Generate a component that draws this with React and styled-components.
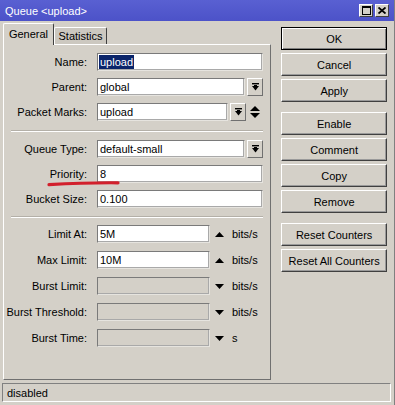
import React from "react";
import styled, { createGlobalStyle } from "styled-components";

const GlobalStyle = createGlobalStyle`
  html, body {
    margin: 0;
    padding: 0;
    background: #d4d0c8;
  }
  body {
    font-family: "Liberation Sans", Arial, sans-serif;
    font-size: 11px;
    color: #000;
  }
  * {
    box-sizing: border-box;
  }
`;

const DropIcon = () => (
  <svg width="7" height="8" viewBox="0 0 7 8">
    <rect x="0" y="0" width="7" height="1.4" fill="#000" />
    <polygon points="0,3 7,3 3.5,7.5" fill="#000" />
    <rect x="2" y="2" width="3" height="1.2" fill="#000" />
  </svg>
);

const Arrow = ({ up }) => (
  <svg width="9" height="5" viewBox="0 0 9 5">
    <polygon points={up ? "0,5 9,5 4.5,0" : "0,0 9,0 4.5,5"} fill="#000" />
  </svg>
);

const UpDown = () => (
  <svg width="12" height="12" viewBox="0 0 12 12">
    <polygon points="1,5 11,5 6,0" fill="#000" />
    <polygon points="1,7 11,7 6,12" fill="#000" />
  </svg>
);

// each section is a block of rows, separated by an etched line
const sections = [
  {
    gap: 7,
    rows: [
      { label: "Name:", value: "upload", selected: true, width: 166 },
      { label: "Parent:", value: "global", width: 148, drop: true },
      { label: "Packet Marks:", value: "upload", width: 131, drop: true, updown: true },
    ],
  },
  {
    gap: 7,
    sep: 5,
    rows: [
      { label: "Queue Type:", value: "default-small", width: 148, drop: true },
      { label: "Priority:", value: "8", width: 166 },
      { label: "Bucket Size:", value: "0.100", width: 166 },
    ],
  },
  {
    gap: 8,
    sep: 3,
    rows: [
      { label: "Limit At:", value: "5M", width: 113, arrow: "up", unit: "bits/s" },
      { label: "Max Limit:", value: "10M", width: 113, arrow: "up", unit: "bits/s" },
      { label: "Burst Limit:", value: "", width: 113, arrow: "down", unit: "bits/s", disabled: true },
      { label: "Burst Threshold:", value: "", width: 113, arrow: "down", unit: "bits/s", disabled: true },
      { label: "Burst Time:", value: "", width: 113, arrow: "down", unit: "s", disabled: true },
    ],
  },
];

const buttonGroups = [
  ["OK", "Cancel", "Apply"],
  ["Enable", "Comment", "Copy", "Remove"],
  ["Reset Counters", "Reset All Counters"],
];

const App = () => {
  return (
    <>
      <GlobalStyle />
      <Window>
        <TitleBar>
          <TitleText>Queue &lt;upload&gt;</TitleText>
          <TitleButtons>
            <TitleBtn>
              <svg width="9" height="9" viewBox="0 0 9 9">
                <rect x="0.5" y="0.5" width="8" height="8" fill="none" stroke="#000" />
                <rect x="0" y="0" width="9" height="2" fill="#000" />
              </svg>
            </TitleBtn>
            <TitleBtn>
              <svg width="8" height="7" viewBox="0 0 8 7">
                <path d="M0.5 0.5 L7.5 6.5 M7.5 0.5 L0.5 6.5" stroke="#000" strokeWidth="1.8" />
              </svg>
            </TitleBtn>
          </TitleButtons>
        </TitleBar>

        <Body>
          <LeftSide>
            <Tabs>
              <Tab $active>General</Tab>
              <Tab>Statistics</Tab>
            </Tabs>
            <Panel>
              <Form>
                {sections.map((sec, si) => (
                  <React.Fragment key={si}>
                    {sec.sep && <Separator $h={sec.sep} />}
                    <Section $gap={sec.gap}>
                      {sec.rows.map((row) => (
                        <Row key={row.label}>
                          <Label>{row.label}</Label>
                          <Field $width={row.width} $disabled={row.disabled}>
                            {row.selected ? <Selected>{row.value}</Selected> : row.value}
                          </Field>
                          {row.drop && (
                            <DropButton>
                              <DropIcon />
                            </DropButton>
                          )}
                          {row.updown && (
                            <UpDownWrap>
                              <UpDown />
                            </UpDownWrap>
                          )}
                          {row.arrow && (
                            <ArrowWrap>
                              <Arrow up={row.arrow === "up"} />
                            </ArrowWrap>
                          )}
                          {row.unit && <Unit>{row.unit}</Unit>}
                        </Row>
                      ))}
                    </Section>
                  </React.Fragment>
                ))}
              </Form>
              <Marker width="74" height="8" viewBox="0 0 74 8">
                <path
                  d="M2 5.6 C 20 4.6, 45 3.6, 71 3.8"
                  stroke="#d2202c"
                  strokeWidth="3.2"
                  strokeLinecap="round"
                  fill="none"
                />
              </Marker>
            </Panel>
          </LeftSide>

          <ButtonColumn>
            {buttonGroups.map((group, gi) => (
              <ButtonGroup key={gi}>
                {group.map((b) => (
                  <Button key={b} $default={b === "OK"}>
                    {b}
                  </Button>
                ))}
              </ButtonGroup>
            ))}
          </ButtonColumn>
        </Body>

        <StatusBar>disabled</StatusBar>
      </Window>
    </>
  );
};

export default App;

const Window = styled.div`
  width: 395px;
  height: 405px;
  display: flex;
  flex-direction: column;
  background: #d4d0c8;
  border-right: 1px solid #808080;
`;

const TitleBar = styled.div`
  height: 21px;
  display: flex;
  align-items: center;
  padding: 0 5px 0 5px;
  background: linear-gradient(180deg, #5960d2 0%, #4c52c8 100%);
  color: #fff;
`;

const TitleText = styled.span`
  font-size: 11px;
  padding-top: 1px;
`;

const TitleButtons = styled.div`
  margin-left: auto;
  display: flex;
  gap: 2px;
`;

const TitleBtn = styled.div`
  width: 14px;
  height: 13px;
  display: flex;
  align-items: center;
  justify-content: center;
  background: #d4d0c8;
  border: 1px solid;
  border-color: #fff #404040 #404040 #fff;
`;

const Body = styled.div`
  display: flex;
  gap: 10px;
  padding: 2px 7px 0 3px;
  height: 359px;
`;

const LeftSide = styled.div`
  width: 269px;
  display: flex;
  flex-direction: column;
`;

const Tabs = styled.div`
  display: flex;
  align-items: flex-end;
  height: 21px;
  position: relative;
  z-index: 1;
`;

const Tab = styled.div`
  height: ${(p) => (p.$active ? "22px" : "17px")};
  width: ${(p) => (p.$active ? "51px" : "53px")};
  display: flex;
  align-items: center;
  justify-content: center;
  padding-bottom: ${(p) => (p.$active ? "2px" : "0")};
  background: ${(p) => (p.$active ? "#d4d0c8" : "#ccc8c0")};
  border: 1px solid;
  border-color: #fff #404040 transparent #fff;
  border-bottom: none;
  margin-bottom: ${(p) => (p.$active ? "-1px" : "0")};
  border-radius: 2px 2px 0 0;
`;

const Panel = styled.div`
  flex: 1;
  position: relative;
  border: 1px solid;
  border-color: #fff #707070 #707070 #fff;
  padding-top: 8px;
`;

const Form = styled.div`
  display: flex;
  flex-direction: column;
  gap: 7px;
`;

const Section = styled.div`
  display: flex;
  flex-direction: column;
  gap: ${(p) => p.$gap}px;
`;

const Row = styled.div`
  display: flex;
  align-items: center;
  height: 18px;
`;

const Label = styled.div`
  width: 83px;
  margin-right: 10px;
  text-align: right;
  white-space: nowrap;
`;

const Field = styled.div`
  width: ${(p) => p.$width}px;
  height: 18px;
  display: flex;
  align-items: center;
  padding-left: 2px;
  background: ${(p) => (p.$disabled ? "#d4d0c8" : "#fff")};
  border: 1px solid;
  border-color: #7a7a7a #e6e4df #e6e4df #7a7a7a;
  box-shadow: inset -1px -1px 0 #a9a9a9;
  white-space: nowrap;
`;

const Selected = styled.span`
  background: #0a246a;
  color: #fff;
  padding: 0 1px;
  margin-left: -1px;
  line-height: 14px;
`;

const DropButton = styled.div`
  width: 16px;
  height: 18px;
  margin-left: 2px;
  display: flex;
  align-items: center;
  justify-content: center;
  border: 1px solid;
  border-color: #fff #707070 #707070 #fff;
`;

const UpDownWrap = styled.div`
  display: flex;
  align-items: center;
  margin-left: 3px;
`;

const ArrowWrap = styled.div`
  display: flex;
  align-items: center;
  margin-left: 5px;
`;

const Unit = styled.span`
  margin-left: 8px;
`;

const Separator = styled.div`
  height: ${(p) => p.$h}px;
  margin: 0 7px;
  display: flex;
  align-items: center;

  &::before {
    content: "";
    flex: 1;
    height: 0;
    border-top: 1px solid #b4b0a8;
    border-bottom: 1px solid #fff;
  }
`;

const Marker = styled.svg`
  position: absolute;
  left: 43px;
  top: 134px;
`;

const ButtonColumn = styled.div`
  width: 106px;
  padding-top: 4px;
  display: flex;
  flex-direction: column;
  gap: 10px;
`;

const ButtonGroup = styled.div`
  display: flex;
  flex-direction: column;
  gap: 3px;
`;

const Button = styled.div`
  height: 23px;
  display: flex;
  align-items: center;
  justify-content: center;
  background: #d4d0c8;
  border: 1px solid;
  border-color: ${(p) => (p.$default ? "#000" : "#fff #404040 #404040 #fff")};
  box-shadow: ${(p) =>
    p.$default
      ? "inset 1px 1px 0 #fff, inset -1px -1px 0 #808080"
      : "inset -1px -1px 0 #9a9a9a"};
  white-space: nowrap;
`;

const StatusBar = styled.div`
  height: 19px;
  margin: 3px 3px 0 2px;
  padding-left: 4px;
  display: flex;
  align-items: center;
  border: 1px solid;
  border-color: #808080 #fff #fff #808080;
`;
